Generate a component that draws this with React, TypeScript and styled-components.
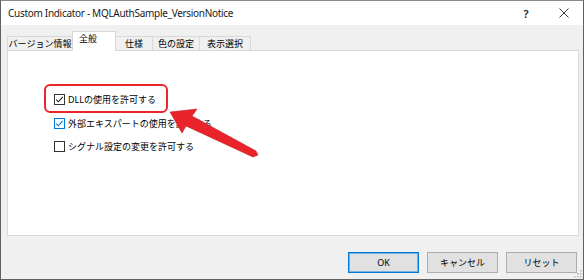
import React from "react";
import styled, { createGlobalStyle } from "styled-components";

const GlobalStyle = createGlobalStyle`
  html, body {
    margin: 0;
    padding: 0;
    background: #ffffff;
  }
  body {
    font-family: "Noto Sans", "Noto Sans CJK JP", sans-serif;
    color: #000;
  }
`;

const Window = styled.div`
  position: relative;
  width: 584px;
  height: 280px;
  box-sizing: border-box;
  border: 1px solid #606060;
  border-top-color: #8a8a8a;
  background: #f0f0f0;
  display: flex;
  flex-direction: column;
  overflow: hidden;
`;

const TitleBar = styled.div`
  height: 24px;
  flex: none;
  background: #ffffff;
  display: flex;
  align-items: center;
  padding-left: 7px;
`;

const TitleText = styled.div`
  flex: 1;
  font-family: "Noto Sans", sans-serif;
  font-size: 10px;
  letter-spacing: -0.3px;
  color: #1a1a1a;
`;

const TitleButton = styled.div`
  width: 38px;
  height: 24px;
  display: flex;
  align-items: center;
  justify-content: center;
  font-family: "Noto Sans", sans-serif;
  font-size: 11px;
  font-weight: 600;
  color: #222;
`;

const Body = styled.div`
  flex: 1;
  display: flex;
  flex-direction: column;
  padding: 6px 4px 0 6px;
`;

const TabStrip = styled.div`
  display: flex;
  align-items: flex-end;
  height: 19px;
  position: relative;
  z-index: 1;
`;

const Tab = styled.div<{ $active?: boolean; $w: number }>`
  width: ${({ $w }) => $w}px;
  height: ${({ $active }) => ($active ? 20 : 14)}px;
  margin-left: -1px;
  margin-bottom: ${({ $active }) => ($active ? -1 : 0)}px;
  box-sizing: border-box;
  border: 1px solid #d9d9d9;
  border-bottom: none;
  background: ${({ $active }) => ($active ? "#ffffff" : "#f0f0f0")};
  display: flex;
  align-items: ${({ $active }) => ($active ? "flex-start" : "center")};
  justify-content: ${({ $active }) => ($active ? "flex-start" : "center")};
  padding-left: ${({ $active }) => ($active ? 6 : 0)}px;
  font-family: "Noto Sans CJK JP", sans-serif;
  font-size: 9px;
  color: #000;
  &:first-child {
    margin-left: 0;
  }
`;

const Panel = styled.div`
  height: 186px;
  flex: none;
  box-sizing: border-box;
  background: #ffffff;
  border: 1px solid #d9d9d9;
  padding: 37px 0 0 46px;
  display: flex;
  flex-direction: column;
`;

const Row = styled.label`
  display: flex;
  align-items: center;
  gap: 3px;
  height: 23.5px;
  font-family: "Noto Sans", "Noto Sans CJK JP", sans-serif;
  font-size: 9px;
  color: #000;
`;

const Box = styled.span<{ $focus?: boolean }>`
  width: 11px;
  height: 11px;
  box-sizing: border-box;
  border: 1px solid ${({ $focus }) => ($focus ? "#0078d7" : "#333333")};
  background: #fff;
  display: flex;
  align-items: center;
  justify-content: center;
`;

const Footer = styled.div`
  display: flex;
  justify-content: flex-end;
  gap: 8px;
  padding: 16px 2px 0 0;
`;

const Button = styled.div<{ $default?: boolean }>`
  width: 71px;
  height: 21px;
  box-sizing: border-box;
  border: 1px solid ${({ $default }) => ($default ? "#0078d7" : "#adadad")};
  box-shadow: ${({ $default }) => ($default ? "inset 0 0 0 1px rgba(0,120,215,0.45)" : "none")};
  background: #e1e1e1;
  display: flex;
  align-items: center;
  justify-content: center;
  font-family: "Noto Sans", "Noto Sans CJK JP", sans-serif;
  font-size: 9px;
  color: #000;
`;

const Highlight = styled.div`
  position: absolute;
  left: 43px;
  top: 83px;
  width: 124px;
  height: 29px;
  box-sizing: border-box;
  border: 2px solid #e8262c;
  border-radius: 6px;
  pointer-events: none;
`;

const Overlay = styled.svg`
  position: absolute;
  left: -1px;
  top: -1px;
  pointer-events: none;
`;

const Grip = styled.svg`
  position: absolute;
  right: 1px;
  bottom: 1px;
`;

const Check = ({ on, focus }: { on?: boolean; focus?: boolean }) => (
  <Box $focus={focus}>
    {on && (
      <svg width="9" height="9" viewBox="0 0 9 9">
        <path d="M1.2 4.6 L3.4 6.8 L7.8 1.8" fill="none" stroke={focus ? "#0078d7" : "#222"} strokeWidth="1.1" />
      </svg>
    )}
  </Box>
);

const tabs = [
  { label: "バージョン情報", w: 66 },
  { label: "全般", w: 44, active: true },
  { label: "仕様", w: 38 },
  { label: "色の設定", w: 48 },
  { label: "表示選択", w: 52 },
];

const rows = [
  { label: "DLLの使用を許可する", on: true },
  { label: "外部エキスパートの使用を許可する", on: true, focus: true },
  { label: "シグナル設定の変更を許可する", on: false },
];

export default function App() {
  return (
    <>
      <GlobalStyle />
      <Window>
        <TitleBar>
          <TitleText>Custom Indicator - MQLAuthSample_VersionNotice</TitleText>
          <TitleButton>?</TitleButton>
          <TitleButton>
            <svg width="10" height="10" viewBox="0 0 10 10">
              <path d="M0.5 0.5 L9.5 9.5 M9.5 0.5 L0.5 9.5" stroke="#222" strokeWidth="0.9" />
            </svg>
          </TitleButton>
        </TitleBar>
        <Body>
          <TabStrip>
            {tabs.map((t) => (
              <Tab key={t.label} $w={t.w} $active={t.active}>
                {t.label}
              </Tab>
            ))}
          </TabStrip>
          <Panel>
            {rows.map((r) => (
              <Row key={r.label}>
                <Check on={r.on} focus={r.focus} />
                {r.label}
              </Row>
            ))}
          </Panel>
          <Footer>
            <Button $default>OK</Button>
            <Button>キャンセル</Button>
            <Button>リセット</Button>
          </Footer>
        </Body>

        <Highlight />
        <Overlay width="585" height="280" viewBox="0 0 585 280">
          <polygon
            points="170,112 197,109 192,116 256,151 258,155 253,157 186,126 182,133"
            fill="#e8232a"
            stroke="#c81a20"
            strokeWidth="0.6"
            strokeLinejoin="round"
          />
        </Overlay>
        <Grip width="8" height="8" viewBox="0 0 8 8">
          {[
            [6, 0], [6, 3], [3, 3], [6, 6], [3, 6], [0, 6],
          ].map(([x, y]) => (
            <rect key={`${x}-${y}`} x={x} y={y} width="1.5" height="1.5" fill="#b5b5b5" />
          ))}
        </Grip>
      </Window>
    </>
  );
}
